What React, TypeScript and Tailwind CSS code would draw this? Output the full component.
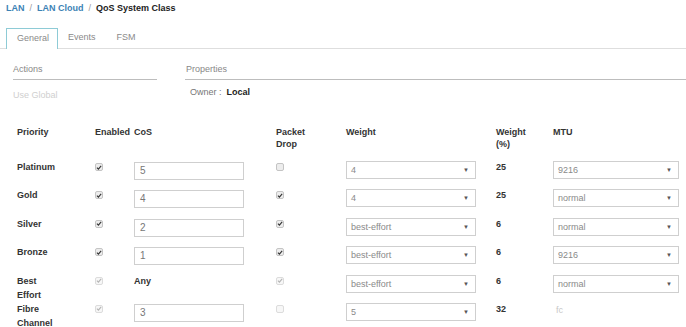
import React from 'react';

type Row = {
  name: string[];
  enabled: 'on' | 'dim';
  cos: string | null;
  drop: 'on' | 'off' | 'dim' | 'dimoff';
  weight: string;
  pct: string;
  mtu: string | null;
};

const rows: Row[] = [
  { name: ['Platinum'], enabled: 'on', cos: '5', drop: 'off', weight: '4', pct: '25', mtu: '9216' },
  { name: ['Gold'], enabled: 'on', cos: '4', drop: 'on', weight: '4', pct: '25', mtu: 'normal' },
  { name: ['Silver'], enabled: 'on', cos: '2', drop: 'on', weight: 'best-effort', pct: '6', mtu: 'normal' },
  { name: ['Bronze'], enabled: 'on', cos: '1', drop: 'on', weight: 'best-effort', pct: '6', mtu: '9216' },
  { name: ['Best', 'Effort'], enabled: 'dim', cos: null, drop: 'dim', weight: 'best-effort', pct: '6', mtu: 'normal' },
  { name: ['Fibre', 'Channel'], enabled: 'dim', cos: '3', drop: 'dimoff', weight: '5', pct: '32', mtu: null },
];

function Check({ state }: { state: 'on' | 'off' | 'dim' | 'dimoff' }) {
  const dim = state === 'dim' || state === 'dimoff';
  const checked = state === 'on' || state === 'dim';
  return (
    <span
      className={
        'mt-[2px] flex h-[8px] w-[8px] items-center justify-center rounded-[2px] border ' +
        (dim ? 'border-[#dcdcdc] bg-[#f7f7f7]' : 'border-[#c4c4c4] bg-[#ededed]')
      }
    >
      {checked && (
        <svg viewBox="0 0 10 10" className="h-[7px] w-[7px]">
          <path
            d="M1.5 5.2 L4 7.6 L8.6 2.2"
            fill="none"
            stroke={dim ? '#b5b5b5' : '#333'}
            strokeWidth="1.9"
          />
        </svg>
      )}
    </span>
  );
}

function Select({ value, w }: { value: string; w: string }) {
  return (
    <div
      className={
        'flex h-[18px] items-center justify-between border border-[#cfcfcf] bg-white pl-[4px] pr-[6px] text-[9px] text-[#8a8a8a] ' +
        w
      }
    >
      <span>{value}</span>
      <span className="text-[6px] text-[#555]">▼</span>
    </div>
  );
}

export default function App() {
  return (
    <div
      className="h-[327px] w-[686px] overflow-hidden bg-white text-[#333]"
      style={{ fontFamily: '"Liberation Sans", Arial, sans-serif' }}
    >
      {/* breadcrumb */}
      <div className="h-[28px] pl-[6px] pt-[1px] text-[9px] font-bold leading-[14px]">
        <span className="text-[#3d82b5]">LAN</span>
        <span className="mx-[5px] font-normal text-[#999]">/</span>
        <span className="text-[#3d82b5]">LAN Cloud</span>
        <span className="mx-[5px] font-normal text-[#999]">/</span>
        <span className="text-[#222]">QoS System Class</span>
      </div>

      {/* tabs */}
      <div className="flex h-[21px] items-start border-b border-[#dedede] text-[9px] text-[#8a8a8a]">
        <div className="ml-[6px] flex h-[21px] w-[52px] items-center border-x border-t border-[#8ecbd6] bg-white pl-[10px]">
          General
        </div>
        <div className="flex h-[20px] items-center pl-[10px]">Events</div>
        <div className="flex h-[20px] items-center pl-[21px]">FSM</div>
      </div>

      {/* actions / properties */}
      <div className="flex h-[77px] text-[9px] leading-[12px]">
        <div className="ml-[13px] w-[144px]">
          <div className="mt-[14px] h-[17px] border-b border-[#bdbdbd] text-[#888]">Actions</div>
          <div className="mt-[9px] text-[#cfcfcf]">Use Global</div>
        </div>
        <div className="ml-[28px] flex-1">
          <div className="mt-[14px] h-[17px] border-b border-[#bdbdbd] pl-[1px] text-[#888]">Properties</div>
          <div className="mt-[6px] pl-[5px]">
            <span className="text-[#777]">Owner :</span>
            <span className="ml-[5px] font-bold text-[#222]">Local</span>
          </div>
        </div>
      </div>

      {/* table */}
      <div className="pl-[17px] text-[9px] leading-[12px]">
        <div className="grid h-[35px] grid-cols-[78px_39px_142px_70px_150px_57px_128px] font-bold">
          <div>Priority</div>
          <div>Enabled</div>
          <div>CoS</div>
          <div>
            Packet
            <br />
            Drop
          </div>
          <div>Weight</div>
          <div>
            Weight
            <br />
            (%)
          </div>
          <div>MTU</div>
        </div>
        {rows.map((r) => (
          <div
            key={r.name.join(' ')}
            className="grid h-[28.4px] grid-cols-[78px_39px_142px_70px_150px_57px_128px] items-start"
          >
            <div className="font-bold">
              {r.name.map((n) => (
                <div key={n} className="h-[14px]">
                  {n}
                </div>
              ))}
            </div>
            <div>
              <Check state={r.enabled} />
            </div>
            <div>
              {r.cos === null ? (
                <div className="font-bold">Any</div>
              ) : (
                <div className="mt-[1px] flex h-[18px] w-[110px] items-center border border-[#cfcfcf] pl-[5px] text-[10px] text-[#777]">
                  {r.cos}
                </div>
              )}
            </div>
            <div>
              <Check state={r.drop} />
            </div>
            <div>
              <Select value={r.weight} w="w-[130px]" />
            </div>
            <div className="font-bold">{r.pct}</div>
            <div>
              {r.mtu === null ? (
                <div className="mt-[1px] pl-[3px] text-[#c8c8c8]">fc</div>
              ) : (
                <Select value={r.mtu} w="w-[126px]" />
              )}
            </div>
          </div>
        ))}
      </div>
    </div>
  );
}
